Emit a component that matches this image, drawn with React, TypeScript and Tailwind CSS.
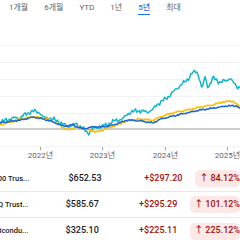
import React from 'react'

const TABS = ['1개월', '6개월', 'YTD', '1년', '5년', '최대']

type Pt = [number, number]

const CYAN: Pt[] = [
  [0, 122], [10, 119], [20, 118], [30, 112], [33, 111], [40, 112], [43, 117], [50, 118],
  [57, 121], [67, 127], [77, 124], [83, 128], [88, 133], [93, 128], [100, 127], [107, 125],
  [115, 121], [123, 119], [128, 113], [137, 110], [147, 112], [153, 110], [157, 105],
  [167, 98], [173, 92], [180, 85], [187, 80], [192, 73], [197, 72], [200, 80], [202, 90],
  [205, 77], [208, 88], [213, 78], [220, 82], [227, 80], [230, 77], [233, 82], [237, 87], [240, 87],
]

const YELLOW: Pt[] = [
  [0, 125], [20, 119], [33, 117], [43, 118], [50, 120], [60, 125], [67, 130], [77, 127],
  [83, 129], [90, 130], [97, 132], [107, 128], [117, 125], [127, 121], [140, 119], [153, 120],
  [160, 117], [173, 113], [187, 110], [200, 107], [213, 105], [223, 102], [233, 101], [240, 107],
]

const BLUE: Pt[] = [
  [0, 123], [20, 120], [33, 117], [43, 119], [53, 122], [63, 126], [73, 125], [83, 129],
  [93, 127], [103, 127], [113, 125], [127, 120], [140, 121], [153, 123], [160, 119], [173, 116],
  [187, 113], [200, 110], [213, 108], [227, 106], [237, 106], [240, 109],
]

// interpolate key points and add a little deterministic wiggle
function toPath(pts: Pt[], amp: number, seed: number) {
  const out: string[] = []
  for (let x = 0; x <= 240; x += 1.2) {
    let i = 0
    while (i < pts.length - 2 && pts[i + 1][0] < x) i++
    const [x0, y0] = pts[i]
    const [x1, y1] = pts[i + 1]
    const t = x1 === x0 ? 0 : Math.min(1, Math.max(0, (x - x0) / (x1 - x0)))
    const n =
      Math.sin(x * 1.7 + seed) * 0.6 +
      Math.sin(x * 0.63 + seed * 2) * 0.7 +
      Math.sin(x * 3.3 + seed * 3) * 0.5 +
      Math.sin(x * 5.1 + seed) * 0.3
    const y = y0 + (y1 - y0) * t + n * amp
    out.push(`${x.toFixed(1)},${y.toFixed(1)}`)
  }
  return 'M' + out.join(' L')
}

const ROWS = [
  { name: 'SPDR S&P 500 Trus...', price: '$652.53', change: '+$297.20', pct: '84.12%', priceW: 'w-[81px]', changeW: 'w-[93px]' },
  { name: 'Invesco QQQ Trust...', price: '$585.67', change: '+$295.29', pct: '101.12%', priceW: 'w-[80px]', changeW: 'w-[92px]' },
  { name: 'iShares Semicondu...', price: '$325.10', change: '+$225.11', pct: '225.12%', priceW: 'w-[81px]', changeW: 'w-[93px]' },
]

function Chart() {
  const grid = [45.5, 62.5, 79.5, 96.5, 113.5]
  const ticks = [40, 102, 165, 227]
  const labels = ['2022년', '2023년', '2024년', '2025년']
  return (
    <div className="relative h-[136px]">
      <svg width="240" height="136" viewBox="0 30 240 136" className="block">
        {grid.map((y) => (
          <line key={y} x1="0" x2="240" y1={y} y2={y} stroke="#f1f3f4" strokeWidth="1" />
        ))}
        <line x1="0" x2="240" y1="146.5" y2="146.5" stroke="#f1f3f4" strokeWidth="1" />
        <line x1="0" x2="240" y1="129" y2="129" stroke="#9aa0a6" strokeWidth="1" />
        {ticks.map((x) => (
          <line key={x} x1={x + 0.5} x2={x + 0.5} y1="147" y2="150" stroke="#9aa0a6" strokeWidth="1" />
        ))}
        <path d={toPath(CYAN, 1.5, 1)} fill="none" stroke="#12b5cb" strokeWidth="1.5" strokeLinejoin="round" />
        <path d={toPath(YELLOW, 0.6, 3)} fill="none" stroke="#fbbc04" strokeWidth="1.6" strokeLinejoin="round" />
        <path d={toPath(BLUE, 0.5, 5)} fill="none" stroke="#1967d2" strokeWidth="1.5" strokeLinejoin="round" />
      </svg>
      {labels.map((l, i) => (
        <span
          key={l}
          className="absolute top-[122px] -translate-x-1/2 text-[8px] text-[#5f6368] leading-none whitespace-nowrap"
          style={{ left: ticks[i] + 0.5 }}
        >
          {l}
        </span>
      ))}
    </div>
  )
}

export default function App() {
  return (
    <div
      className="w-[240px] h-[240px] overflow-hidden bg-white"
      style={{ fontFamily: "Roboto, 'Noto Sans CJK KR', sans-serif" }}
    >
      <div className="flex items-start h-[30px] pl-[9px] gap-[16px] pt-[3px]">
        {TABS.map((t) => (
          <div
            key={t}
            className={
              t === '5년'
                ? 'text-[8px] leading-[10px] text-[#1a73e8] font-medium border-b-[1.5px] border-[#1a73e8] pb-[1px]'
                : 'text-[8px] leading-[10px] text-[#5f6368]'
            }
          >
            {t}
          </div>
        ))}
      </div>
      <Chart />
      <div>
        {ROWS.map((r, i) => (
          <div
            key={r.name}
            className={`flex items-center h-[26px] ${i < ROWS.length - 1 ? 'border-b border-[#e8eaed]' : ''}`}
          >
            <div className="w-[36px] overflow-hidden flex justify-end whitespace-nowrap">
              <span className="text-[7.5px] text-[#202124] font-medium pr-[2px]">{r.name}</span>
            </div>
            <div className={`${r.priceW} text-right text-[9px] font-medium text-[#202124]`}>{r.price}</div>
            <div className={`${r.changeW} text-right text-[9px] font-medium text-[#a50e0e]`}>{r.change}</div>
            <div className="ml-[13px] h-[17px] rounded-[5px] bg-[#fce8e6] text-[#a50e0e] text-[9px] font-medium flex items-center pl-[4px] gap-[2px] whitespace-nowrap">
              <span className="text-[9px]">↑</span>
              <span>{r.pct}</span>
            </div>
          </div>
        ))}
      </div>
    </div>
  )
}
